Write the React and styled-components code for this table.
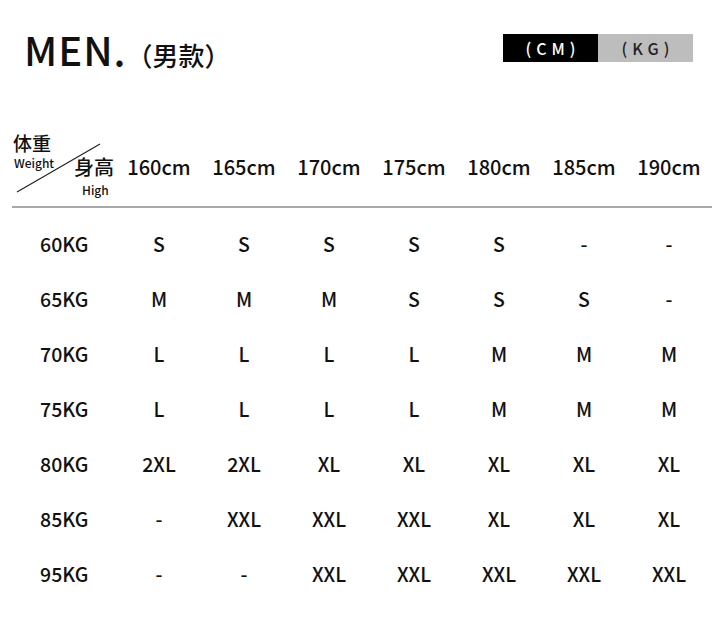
import React from "react";
import styled, { createGlobalStyle } from "styled-components";

const GlobalStyle = createGlobalStyle`
  body {
    margin: 0;
    background: #fff;
    font-family: "Noto Sans CJK SC", "Noto Sans", sans-serif;
    color: #111;
  }
`;

const heights = ["160cm", "165cm", "170cm", "175cm", "180cm", "185cm", "190cm"];

const rows = [
  ["60KG", "S", "S", "S", "S", "S", "-", "-"],
  ["65KG", "M", "M", "M", "S", "S", "S", "-"],
  ["70KG", "L", "L", "L", "L", "M", "M", "M"],
  ["75KG", "L", "L", "L", "L", "M", "M", "M"],
  ["80KG", "2XL", "2XL", "XL", "XL", "XL", "XL", "XL"],
  ["85KG", "-", "XXL", "XXL", "XXL", "XL", "XL", "XL"],
  ["95KG", "-", "-", "XXL", "XXL", "XXL", "XXL", "XXL"],
];

const Page = styled.div`
  width: 718px;
  height: 627px;
  overflow: hidden;
`;

const TopBar = styled.div`
  display: flex;
  align-items: center;
  justify-content: space-between;
  padding: 21px 25px 0 24px;
  height: 56px;
`;

const Title = styled.h1`
  margin: 0;
  font-size: 40px;
  font-weight: 500;
  letter-spacing: 1px;
  line-height: 1;
  display: flex;
  align-items: baseline;
  span {
    font-size: 26px;
    letter-spacing: 0;
  }
`;

const Toggle = styled.div`
  display: flex;
  margin-top: -2px;
`;

const ToggleItem = styled.div`
  width: 95px;
  height: 28px;
  display: flex;
  align-items: center;
  justify-content: center;
  font-size: 16px;
  font-weight: 500;
  letter-spacing: 5px;
  padding-left: 5px;
  box-sizing: border-box;
  background: ${(p) => (p.$active ? "#000" : "#bdbdbd")};
  color: ${(p) => (p.$active ? "#fff" : "#222")};
`;

const Table = styled.div`
  margin-top: 53px;
  padding: 0 6px 0 12px;
`;

const Grid = styled.div`
  display: grid;
  grid-template-columns: 104.5px repeat(7, 85px);
  align-items: center;
`;

const HeadRow = styled(Grid)`
  height: 76px;
  border-bottom: 2px solid #a8a8a8;
`;

const Corner = styled.div`
  position: relative;
  height: 76px;
`;

const CornerText = styled.span`
  position: absolute;
  left: ${(p) => p.$x}px;
  top: ${(p) => p.$y}px;
  font-size: ${(p) => p.$size}px;
  font-weight: 500;
  line-height: 1;
  white-space: nowrap;
`;

const Diagonal = styled.svg`
  position: absolute;
  left: 0;
  top: 0;
`;

const HeadCell = styled.div`
  text-align: center;
  font-size: 20px;
  font-weight: 500;
  padding-bottom: 4px;
`;

const BodyRow = styled(Grid)`
  height: 55px;
  &:first-child {
    margin-top: 8px;
  }
`;

const Cell = styled.div`
  text-align: center;
  font-size: 19.5px;
  font-weight: 500;
`;

export default function App() {
  return (
    <Page>
      <GlobalStyle />
      <TopBar>
        <Title>
          MEN.<span>（男款）</span>
        </Title>
        <Toggle>
          <ToggleItem $active>(CM)</ToggleItem>
          <ToggleItem>(KG)</ToggleItem>
        </Toggle>
      </TopBar>
      <Table>
        <HeadRow>
          <Corner>
            <CornerText $x={1} $y={3} $size={19}>体重</CornerText>
            <CornerText $x={2} $y={27} $size={12}>Weight</CornerText>
            <CornerText $x={62} $y={27} $size={20}>身高</CornerText>
            <CornerText $x={70} $y={54} $size={12}>High</CornerText>
            <Diagonal width="104" height="76">
              <line x1="5" y1="62" x2="88" y2="14" stroke="#222" strokeWidth="1.2" />
            </Diagonal>
          </Corner>
          {heights.map((h) => (
            <HeadCell key={h}>{h}</HeadCell>
          ))}
        </HeadRow>
        <div>
          {rows.map((r) => (
            <BodyRow key={r[0]}>
              {r.map((c, i) => (
                <Cell key={i}>{c}</Cell>
              ))}
            </BodyRow>
          ))}
        </div>
      </Table>
    </Page>
  );
}
